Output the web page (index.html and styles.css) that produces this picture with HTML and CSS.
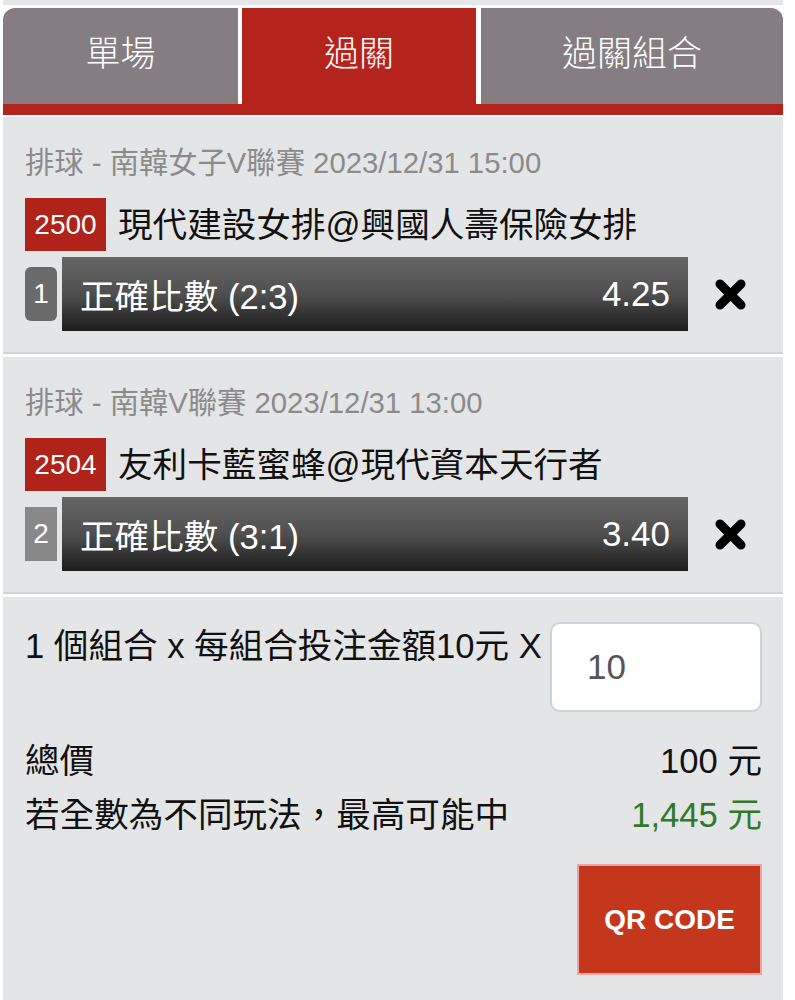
FILE: index.html
```html
<!DOCTYPE html>
<html>
	<head>
		<meta charset="UTF-8">
		<title>過關</title>
		<link rel="stylesheet" href="styles.css">
	</head>
	<body>
		<div class="slip">
			<div class="topbar"></div>
			<ul class="tabs">
				<li class="tab first">單場</li>
				<li class="tab active">過關</li>
				<li class="tab last">過關組合</li>
			</ul>

			<div class="bet">
				<p class="meta">排球 - 南韓女子V聯賽 2023/12/31 15:00</p>
				<div class="match">
					<span class="code">2500</span>
					<span class="teams">現代建設女排@興國人壽保險女排</span>
				</div>
				<div class="pick">
					<span class="no">1</span>
					<div class="sel">
						<span>正確比數 (2:3)</span>
						<span class="odds">4.25</span>
					</div>
					<svg class="del" width="33" height="33" viewBox="0 0 33 33">
						<path d="M6 6 L27 27 M27 6 L6 27" stroke="#000" stroke-width="9" stroke-linecap="round" fill="none"/>
					</svg>
				</div>
			</div>

			<div class="bet">
				<p class="meta">排球 - 南韓V聯賽 2023/12/31 13:00</p>
				<div class="match">
					<span class="code">2504</span>
					<span class="teams">友利卡藍蜜蜂@現代資本天行者</span>
				</div>
				<div class="pick">
					<span class="no plain">2</span>
					<div class="sel">
						<span>正確比數 (3:1)</span>
						<span class="odds">3.40</span>
					</div>
					<svg class="del" width="33" height="33" viewBox="0 0 33 33">
						<path d="M6 6 L27 27 M27 6 L6 27" stroke="#000" stroke-width="9" stroke-linecap="round" fill="none"/>
					</svg>
				</div>
			</div>

			<div class="total">
				<div class="stake">
					<span class="label">1 個組合 x 每組合投注金額10元 X</span>
					<input class="times" type="text" value="10">
				</div>
				<div class="row first-row">
					<span>總價</span>
					<span>100 元</span>
				</div>
				<div class="row">
					<span>若全數為不同玩法，最高可能中</span>
					<span class="win">1,445 元</span>
				</div>
				<button class="qr">QR CODE</button>
			</div>
		</div>
	</body>
</html>
```

FILE: styles.css
```css
body{
	margin: 0;
	background: #fff;
	font-family: "Liberation Sans", "Noto Sans CJK TC", sans-serif;
}
.slip{
	width: 780px;
	margin-left: 3px;
}
.topbar{
	height: 5px;
	background: #e4e5e7;
	margin-bottom: 3px;
}
/* tabs */
.tabs{
	display: flex;
	margin: 0 0 2px;
	padding: 0;
	list-style: none;
	border-bottom: 11px solid #b5241c;
}
.tab{
	height: 96px;
	box-sizing: border-box;
	padding-bottom: 4px;
	line-height: 92px;
	text-align: center;
	font-size: 35px;
	font-weight: 300;
	color: #fff;
	background: #857d82;
}
.tab.first{
	width: 235px;
	margin-right: 4px;
	border-top-left-radius: 12px;
}
.tab.active{
	width: 234px;
	margin-right: 5px;
	background: #b5241c;
}
.tab.last{
	flex: 1;
	border-top-right-radius: 12px;
}
/* bets */
.bet{
	height: 209px;
	padding: 26px 21px 0 22px;
	background: #e4e5e7;
	border-bottom: 2px solid #d3d4d6;
	margin-bottom: 3px;
}
.meta{
	margin: 0;
	font-size: 29.3px;
	line-height: 40px;
	color: #8b8b8b;
	white-space: nowrap;
}
.match{
	display: flex;
	align-items: center;
	margin-top: 15px;
	height: 53px;
}
.code{
	width: 81px;
	height: 53px;
	line-height: 53px;
	text-align: center;
	font-size: 28px;
	color: #fff;
	background: #b0231b;
}
.teams{
	margin-left: 12px;
	margin-top: -6px;
	font-size: 34.6px;
	color: #111;
	white-space: nowrap;
}
.pick{
	display: flex;
	align-items: center;
	margin-top: 6px;
}
.no{
	width: 32px;
	height: 54px;
	line-height: 54px;
	text-align: center;
	font-size: 28px;
	color: #fff;
	background: #6a6a6a;
	border-radius: 6px;
}
.no.plain{
	background: #888;
	border-radius: 0;
}
.sel{
	flex: 1;
	height: 74px;
	margin-left: 5px;
	padding: 0 18px;
	display: flex;
	align-items: center;
	justify-content: space-between;
	font-size: 34.6px;
	color: #fff;
	background: linear-gradient(to bottom, #666 0%, #4f4f4f 50%, #1c1c1c 100%);
}
.odds{
	font-size: 35px;
}
.del{
	margin: 0 15px 0 26px;
	flex: none;
}
/* totals */
.total{
	padding: 25px 21px 25px 22px;
	background: #e4e5e7;
	font-size: 34.6px;
	color: #111;
}
.stake{
	display: flex;
	justify-content: space-between;
	align-items: flex-start;
}
.label{
	line-height: 48px;
	white-space: nowrap;
}
.times{
	width: 212px;
	height: 90px;
	box-sizing: border-box;
	border: 2px solid #cfd2d8;
	border-radius: 10px;
	background: #fff;
	padding: 0 0 0 35px;
	font: 35px "Liberation Sans", sans-serif;
	color: #555;
	outline: none;
}
.row{
	display: flex;
	justify-content: space-between;
	line-height: 54px;
}
.first-row{
	margin-top: 22px;
}
.win{
	color: #2e7a25;
}
.qr{
	display: block;
	margin: 22px 0 0 auto;
	width: 185px;
	height: 111px;
	box-sizing: border-box;
	border: 2px solid #f0a3a0;
	background: #c5371c;
	color: #fff;
	font: bold 28px "Liberation Sans", sans-serif;
	padding: 0;
}
```
